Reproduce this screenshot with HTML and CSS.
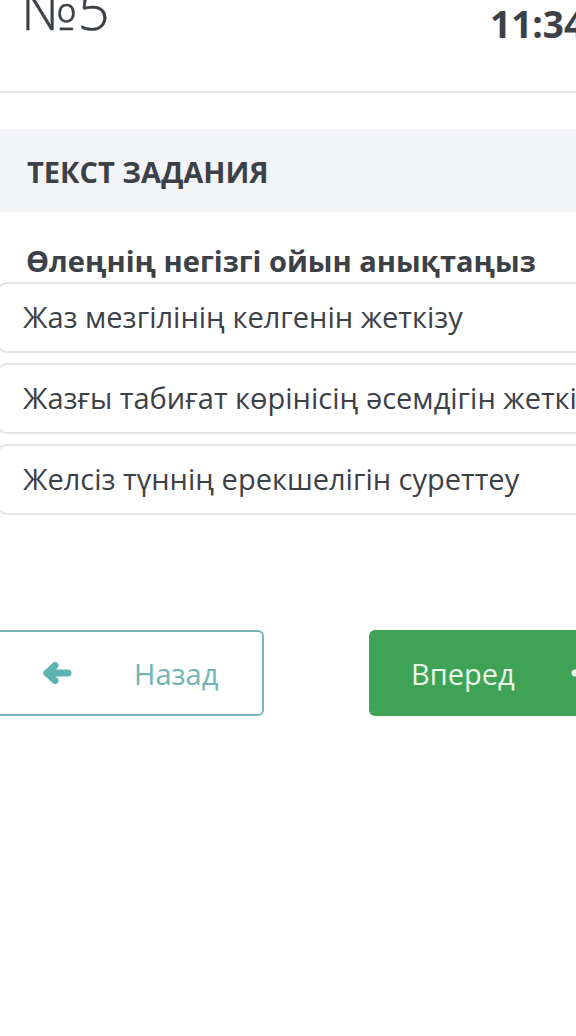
FILE: index.html
```html
<!DOCTYPE html>
<html lang="kk">
<head>
<meta charset="utf-8">
<title>№5</title>
<link rel="stylesheet" href="styles.css">
</head>
<body>
<div class="page">
  <header class="top">
    <span class="num">№5</span>
    <span class="time">11:34</span>
  </header>
  <div class="band"><h2 class="band-title">ТЕКСТ ЗАДАНИЯ</h2></div>
  <p class="question">Өлеңнің негізгі ойын анықтаңыз</p>
  <ul class="options">
    <li class="option">Жаз мезгілінің келгенін жеткізу</li>
    <li class="option">Жазғы табиғат көрінісің әсемдігін жеткізу</li>
    <li class="option">Желсіз түннің ерекшелігін суреттеу</li>
  </ul>
  <div class="nav">
    <button class="btn btn-back">
      <svg class="arrow" width="30" height="24" viewBox="0 0 30 24"><polyline points="13,4.5 5,12 13,19.5" fill="none" stroke="currentColor" stroke-width="7" stroke-linecap="round" stroke-linejoin="round"/><line x1="5" y1="12" x2="26" y2="12" stroke="currentColor" stroke-width="7" stroke-linecap="round"/></svg>
      <span>Назад</span>
    </button>
    <button class="btn btn-next">
      <span>Вперед</span>
      <svg class="arrow" width="30" height="24" viewBox="0 0 30 24"><polyline points="17,4.5 25,12 17,19.5" fill="none" stroke="currentColor" stroke-width="7" stroke-linecap="round" stroke-linejoin="round"/><line x1="4" y1="12" x2="25" y2="12" stroke="currentColor" stroke-width="7" stroke-linecap="round"/></svg>
    </button>
  </div>
</div>
</body>
</html>
```
FILE: styles.css
```css
html, body {
  margin: 0;
  padding: 0;
  overflow: hidden;
  background: #ffffff;
}
body {
  font-family: "Open Sans", "Noto Sans", sans-serif;
  color: #3c4047;
}
.page {
  width: 760px;
}
.top {
  display: grid;
  grid-template-columns: 469px auto;
  align-items: start;
  height: 91px;
  padding-left: 21px;
  border-bottom: 2px solid #e6e7e9;
  overflow: hidden;
}
.num {
  font-size: 56px;
  font-weight: 300;
  line-height: 1;
  margin-top: -20px;
  -webkit-text-stroke: 0.4px #3c4047;
}
.time {
  font-size: 37px;
  font-weight: 700;
  line-height: 1;
  margin-top: 5px;
}
.band {
  margin-top: 36px;
  height: 83px;
  background: #f3f4f8;
  box-sizing: border-box;
  padding: 28px 0 0 27px;
}
.band-title {
  margin: 0;
  font-size: 29px;
  font-weight: 700;
  line-height: 1;
}
.question {
  margin: 34px 0 7px 26px;
  font-size: 29px;
  font-weight: 700;
  line-height: 1;
}
.options {
  list-style: none;
  margin: 0 0 0 -3px;
  padding: 0;
  display: flex;
  flex-direction: column;
  gap: 10px;
}
.option {
  border: 2px solid #e3e5e8;
  border-radius: 10px;
  padding: 19px 0 20px 24px;
  font-size: 29px;
  line-height: 28px;
  white-space: nowrap;
}
.nav {
  display: flex;
  gap: 105px;
  margin: 115px 0 0 -9px;
}
.btn {
  width: 273px;
  height: 86px;
  box-sizing: border-box;
  border-radius: 6px;
  display: flex;
  align-items: center;
  font-family: inherit;
  font-size: 29px;
  padding: 0;
  cursor: pointer;
}
.btn-back {
  background: #ffffff;
  border: 2px solid #78b6b6;
  color: #6fb5b5;
  padding-left: 49px;
  gap: 62px;
}
.btn-back .arrow {
  color: #5cb3b2;
}
.btn-next {
  background: #3ea355;
  border: 0;
  color: #eaf6ea;
  padding-left: 42px;
  gap: 56px;
}
.arrow {
  flex: none;
}
```
